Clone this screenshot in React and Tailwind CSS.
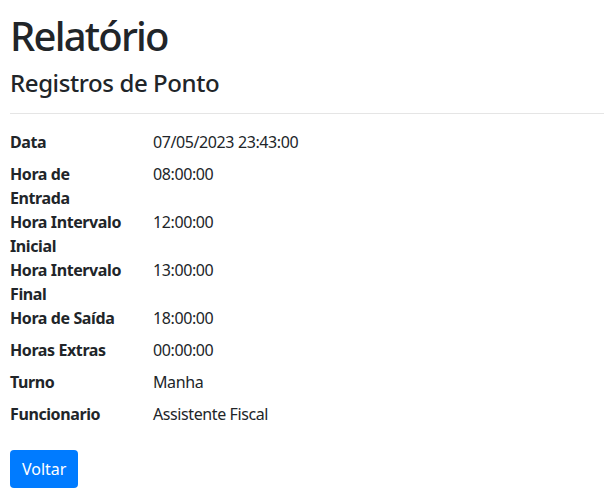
const registro = [
  { label: ['Data'], value: '07/05/2023 23:43:00' },
  { label: ['Hora de', 'Entrada'], value: '08:00:00' },
  { label: ['Hora Intervalo', 'Inicial'], value: '12:00:00' },
  { label: ['Hora Intervalo', 'Final'], value: '13:00:00' },
  { label: ['Hora de Saída'], value: '18:00:00' },
  { label: ['Horas Extras'], value: '00:00:00' },
  { label: ['Turno'], value: 'Manha' },
  { label: ['Funcionario'], value: 'Assistente Fiscal' },
];

const App = () => {
  return (
    <div className="min-h-screen bg-white pl-[10px] pt-[12px] text-[#212529] tracking-[-0.025em] font-['Segoe_UI','Noto_Sans',sans-serif]">
      <h1 className="text-[40px] leading-[48px] font-medium tracking-[-0.045em] mb-2">Relatório</h1>
      <div>
        <h4 className="text-[24px] leading-[29px] font-medium">Registros de Ponto</h4>
        <hr className="mt-4 mb-4 border-0 border-t border-black/10" />
        <dl className="mb-4">
          {registro.map((row) => (
            <div key={row.label.join(' ')} className="flex">
              <dt className="w-[143px] shrink-0 text-[16px] leading-6 font-bold">
                {row.label.map((line) => (
                  <div key={line}>{line}</div>
                ))}
              </dt>
              <dd className="text-[16px] leading-6 mb-2">{row.value}</dd>
            </div>
          ))}
        </dl>
      </div>
      <button className="h-[38px] px-3 bg-[#007bff] hover:bg-[#0069d9] text-white text-[16px] leading-6 tracking-normal rounded">
        Voltar
      </button>
    </div>
  );
};

export default App;
